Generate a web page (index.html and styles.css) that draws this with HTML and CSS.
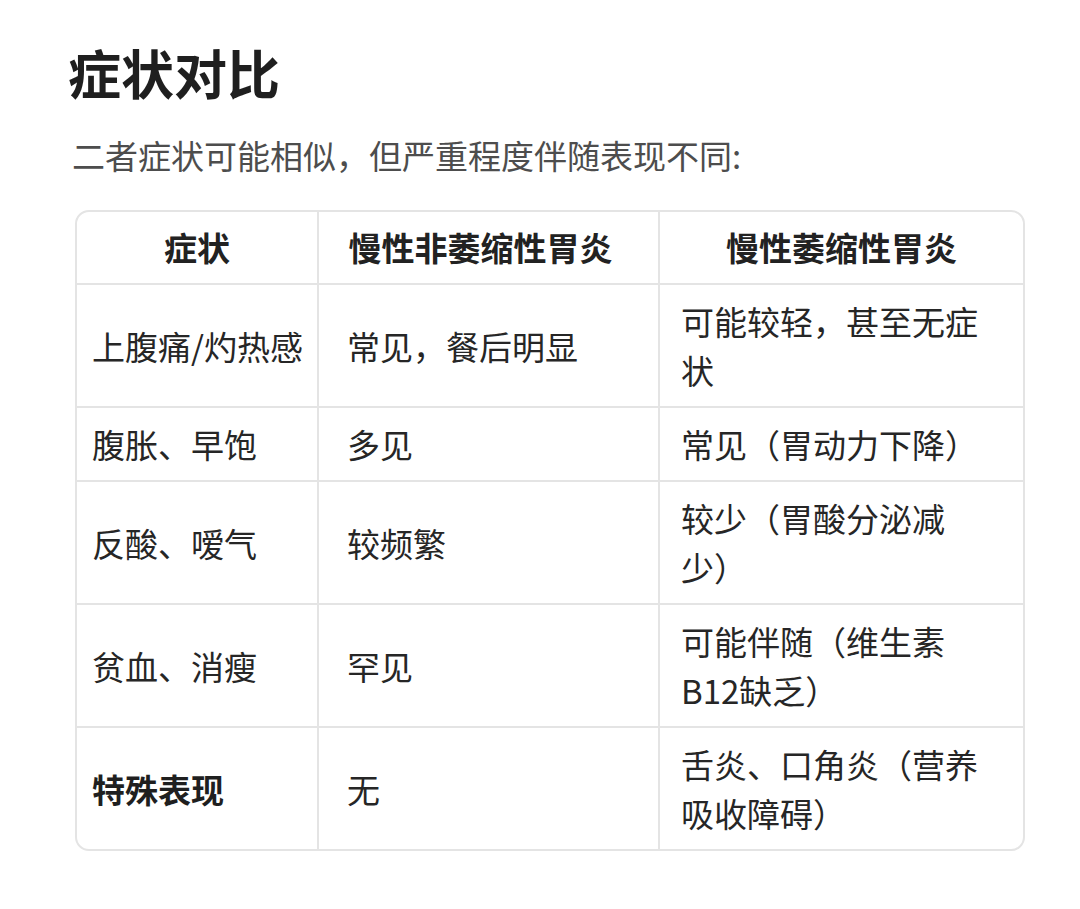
FILE: index.html
```html
<!DOCTYPE html>
<html lang="zh-CN">
<head>
<meta charset="utf-8">
<link rel="stylesheet" href="styles.css">
</head>
<body>
<main class="page">
  <h1 class="title">症状对比</h1>
  <p class="lead">二者症状可能相似，但严重程度伴随表现不同:</p>
  <div class="table-wrap">
    <table class="cmp">
      <colgroup>
        <col class="c1"><col class="c2"><col class="c3">
      </colgroup>
      <thead>
        <tr><th>症状</th><th>慢性非萎缩性胃炎</th><th>慢性萎缩性胃炎</th></tr>
      </thead>
      <tbody>
        <tr><td>上腹痛/灼热感</td><td>常见，餐后明显</td><td>可能较轻，甚至无症状</td></tr>
        <tr><td>腹胀、早饱</td><td>多见</td><td>常见（胃动力下降）</td></tr>
        <tr><td>反酸、嗳气</td><td>较频繁</td><td>较少（胃酸分泌减少）</td></tr>
        <tr><td>贫血、消瘦</td><td>罕见</td><td>可能伴随（维生素B12缺乏）</td></tr>
        <tr><td class="strong">特殊表现</td><td>无</td><td>舌炎、口角炎（营养吸收障碍）</td></tr>
      </tbody>
    </table>
  </div>
</main>
</body>
</html>
```

FILE: styles.css
```css
html, body {
  margin: 0;
  padding: 0;
  background: #ffffff;
}
body {
  font-family: "Noto Sans CJK SC", "Noto Sans", sans-serif;
  color: #222222;
  text-spacing-trim: space-all;
}
.page {
  padding: 40px 0 0 75px;
}
.title {
  margin: 0 0 27px -7px;
  font-size: 53px;
  line-height: 64px;
  font-weight: 700;
  color: #1f1f1f;
}
.lead {
  margin: 0 0 31px -3px;
  font-size: 33px;
  line-height: 48px;
  color: #4d4d4d;
}
.table-wrap {
  width: 946px;
  border: 2px solid #e4e4e4;
  border-radius: 14px;
  overflow: hidden;
}
.cmp {
  width: 946px;
  table-layout: fixed;
  border-collapse: separate;
  border-spacing: 0;
  font-size: 33px;
  line-height: 49px;
  color: #262626;
}
.c1 { width: 242px; }
.c2 { width: 341px; }
.c3 { width: 363px; }
.cmp th,
.cmp td {
  padding: 12px 20px 11px;
  border-right: 2px solid #e4e4e4;
  border-bottom: 2px solid #e4e4e4;
  vertical-align: middle;
  text-align: left;
}
.cmp th {
  padding-top: 11px;
  font-weight: 700;
  text-align: center;
  color: #222222;
}
.cmp th:last-child,
.cmp td:last-child {
  border-right: none;
}
.cmp tbody tr:last-child td {
  border-bottom: none;
}
.cmp th:nth-child(2) {
  padding-left: 12px;
  padding-right: 28px;
}
.cmp td:first-child {
  padding-left: 15px;
  padding-right: 8px;
}
.cmp td:nth-child(2) {
  padding-left: 28px;
}
.cmp td:nth-child(3) {
  padding-left: 21px;
  padding-right: 20px;
}
.cmp td.strong {
  font-weight: 700;
  color: #1f1f1f;
}
```
